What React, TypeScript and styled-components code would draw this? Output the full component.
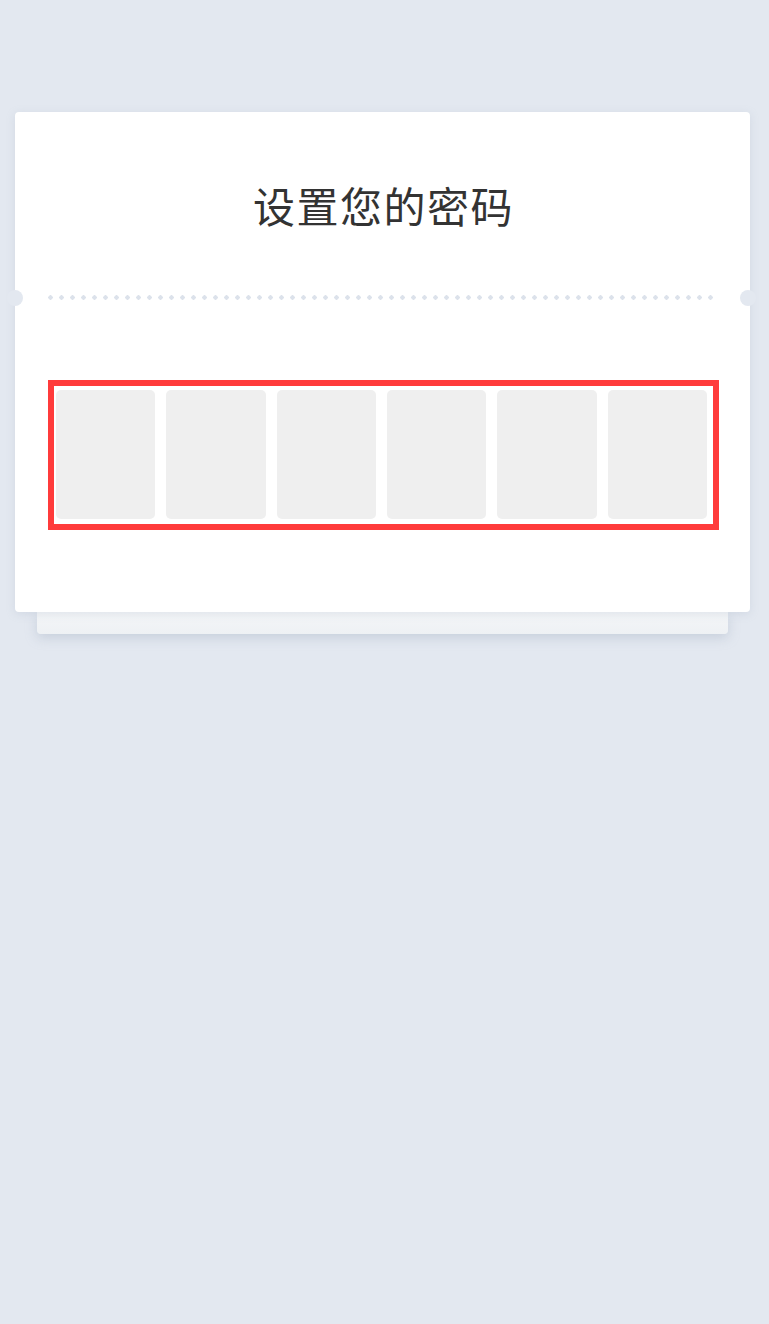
import React from "react"
import styled, { createGlobalStyle } from "styled-components"

const colors = {
  page: "#e3e8f0",
  card: "#ffffff",
  text: "#333333",
  dot: "#dce2eb",
  cell: "#efefef",
  mark: "#ff3b3b",
}

const GlobalStyle = createGlobalStyle`
  html, body {
    margin: 0;
    padding: 0;
    background: ${colors.page};
    font-family: "Noto Sans CJK SC", "Noto Sans", sans-serif;
  }
  * {
    box-sizing: border-box;
  }
`

const Page = styled.div`
  min-height: 1324px;
  padding: 112px 19px 0 15px;
`

const Card = styled.div`
  position: relative;
  background: ${colors.card};
  border-radius: 4px;
  box-shadow: 0 2px 8px rgba(160, 172, 190, 0.25);
  padding: 68px 31px 82px 33px;
  z-index: 1;
`

const Title = styled.h1`
  margin: 0;
  text-align: center;
  font-size: 42px;
  line-height: 50px;
  font-weight: 400;
  letter-spacing: 1.5px;
  color: ${colors.text};
`

const Divider = styled.div`
  position: relative;
  height: 5px;
  margin: 65px 4px 80px 0;
  background-image: radial-gradient(circle, ${colors.dot} 2px, transparent 2.4px);
  background-size: 11px 5px;
  background-position: -3px 0;
  background-repeat: repeat-x;
`

const Notch = styled.span<{ side: "left" | "right" }>`
  position: absolute;
  top: 50%;
  ${(p) => (p.side === "left" ? "left: -41px;" : "right: -41px;")}
  width: 16px;
  height: 16px;
  margin-top: -8px;
  border-radius: 50%;
  background: ${colors.page};
`

const CodeBox = styled.div`
  display: flex;
  gap: 11px;
  border: 6px solid ${colors.mark};
  padding: 4px 6px 5px 2px;
`

const Cell = styled.div`
  flex: 1;
  height: 129px;
  border-radius: 5px;
  background: ${colors.cell};
`

const Stack = styled.div`
  height: 22px;
  margin: 0 22px;
  border-radius: 0 0 4px 4px;
  background: linear-gradient(#f4f6f8, #eef1f4);
  box-shadow: 0 4px 12px rgba(150, 162, 182, 0.35);
`

export default function App() {
  return (
    <>
      <GlobalStyle />
      <Page>
        <Card>
          <Title>设置您的密码</Title>
          <Divider>
            <Notch side="left" />
            <Notch side="right" />
          </Divider>
          <CodeBox>
            {Array.from({ length: 6 }).map((_, i) => (
              <Cell key={i} />
            ))}
          </CodeBox>
        </Card>
        <Stack />
      </Page>
    </>
  )
}
